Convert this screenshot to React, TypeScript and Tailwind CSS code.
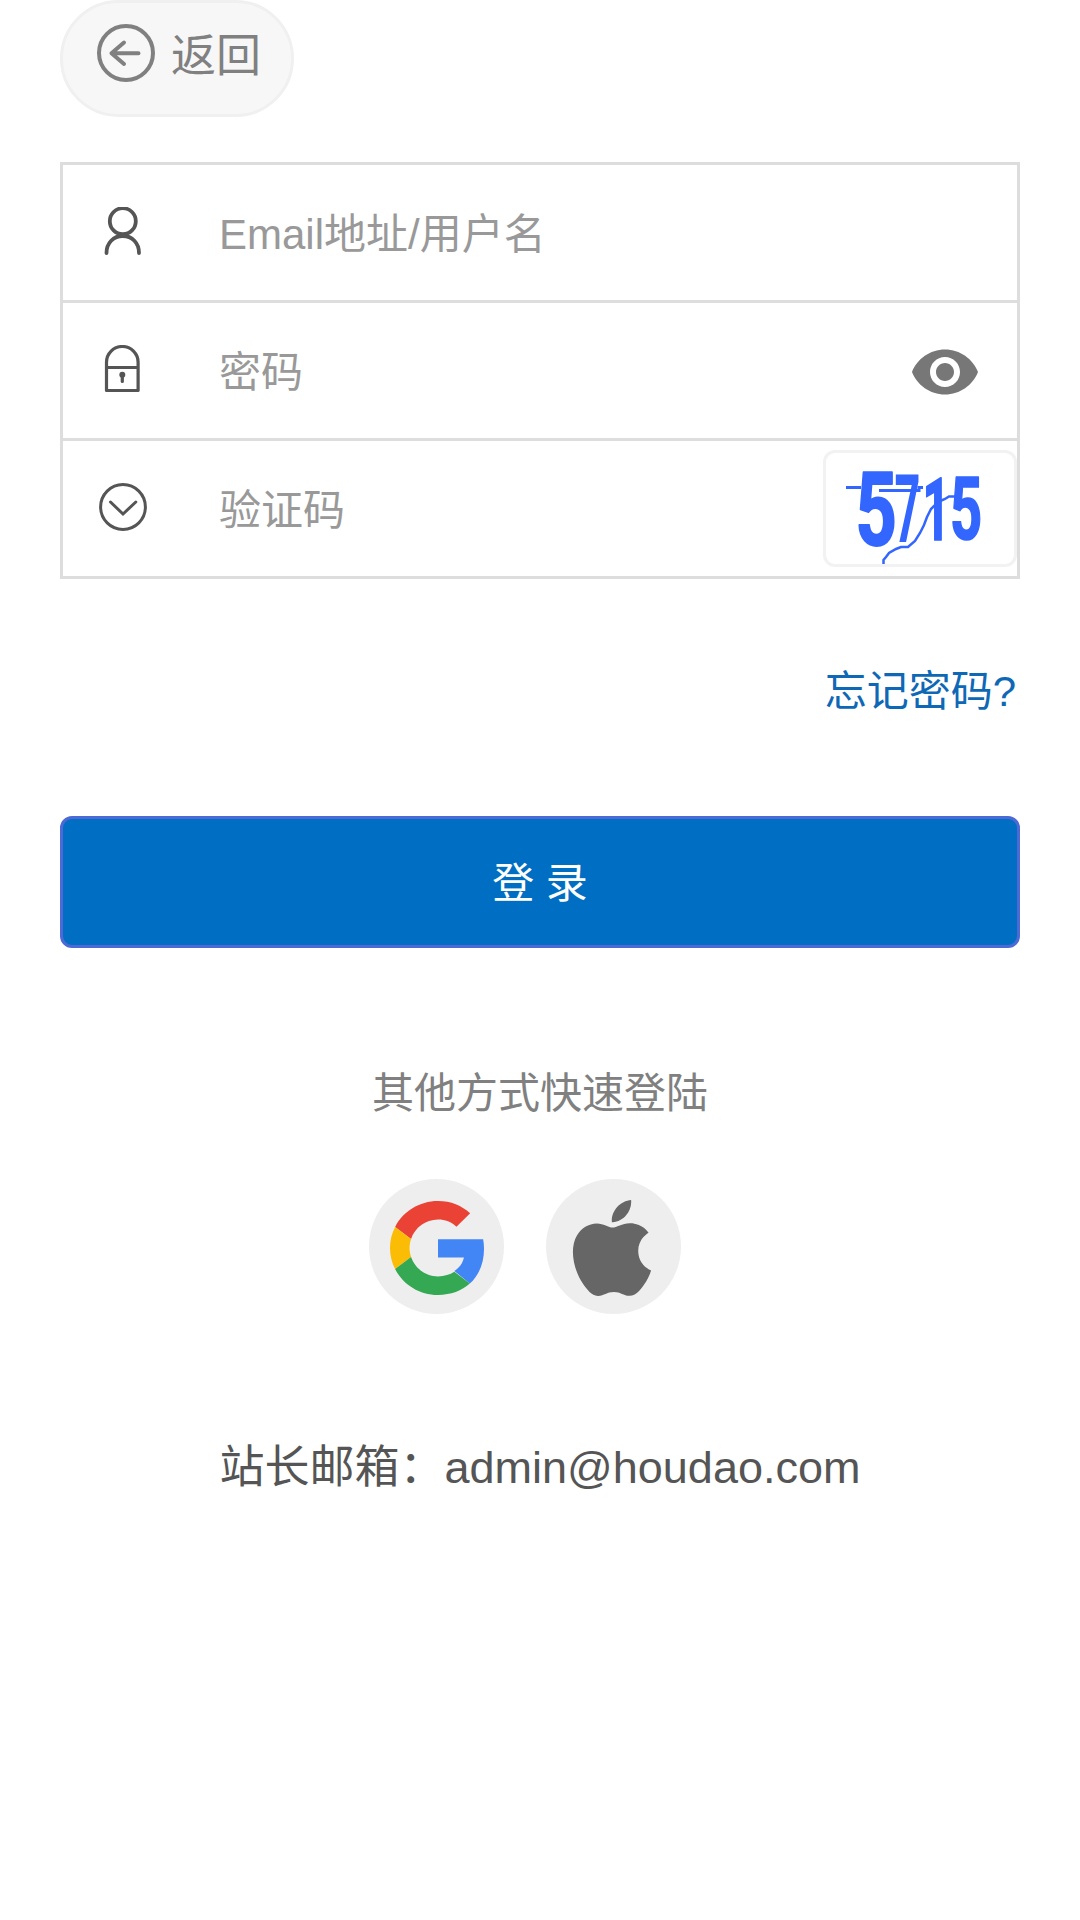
import { useState } from 'react'
import type { ReactNode } from 'react'

function BackIcon() {
  return (
    <svg className="h-[60px] w-[60px]" viewBox="0 0 60 60" fill="none" stroke="#808080" strokeWidth="4" strokeLinecap="round" strokeLinejoin="round" aria-hidden="true">
      <circle cx="30" cy="29" r="27" />
      <path d="M42.5 29.2H15.5M28 18.5L15.5 29.2L28 40" />
    </svg>
  )
}

function UserIcon() {
  return (
    <svg className="h-12 w-12" viewBox="0 0 48 48" fill="none" stroke="#555" strokeWidth="3.8" strokeLinecap="round" aria-hidden="true">
      <circle cx="23.8" cy="14.2" r="13" />
      <path d="M7.5 46C7.5 36 14.5 29 23.8 29S40 36 40 46" />
    </svg>
  )
}

function LockIcon() {
  return (
    <svg className="h-12 w-12" viewBox="0 0 48 48" fill="none" stroke="#555" strokeWidth="3.2" strokeLinejoin="round" aria-hidden="true">
      <path d="M7.5 45.5V17.3a15.8 15.8 0 0 1 31.6 0V45.5ZM7.5 22.5H39.1" />
      <circle cx="23.3" cy="29.7" r="3" fill="#555" stroke="none" />
      <path d="M23.3 30V36.5" strokeLinecap="round" />
    </svg>
  )
}

function CheckIcon() {
  return (
    <svg className="h-12 w-12" viewBox="0 0 48 48" fill="none" stroke="#555" strokeWidth="3" strokeLinecap="round" aria-hidden="true">
      <circle cx="24" cy="24" r="22.4" />
      <path d="M11.5 19L24 31L36.8 19" />
    </svg>
  )
}

function EyeIcon() {
  return (
    <svg className="h-[72px] w-[72px]" viewBox="0 0 24 24" fill="#777" aria-hidden="true">
      <path d="M12 4.5C7 4.5 2.73 7.61 1 12c1.73 4.39 6 7.5 11 7.5s9.27-3.11 11-7.5c-1.73-4.39-6-7.5-11-7.5zM12 17c-2.76 0-5-2.24-5-5s2.24-5 5-5 5 2.24 5 5-2.24 5-5 5zm0-8c-1.66 0-3 1.34-3 3s1.34 3 3 3 3-1.34 3-3-1.34-3-3-3z" />
    </svg>
  )
}

function GoogleIcon() {
  return (
    <svg className="mt-[2px] ml-[1px] h-[94px] w-[94px]" viewBox="0 0 46.98 48" preserveAspectRatio="none" aria-hidden="true">
      <path fill="#EA4335" d="M24 9.5c3.54 0 6.71 1.22 9.21 3.6l6.85-6.85C35.9 2.38 30.47 0 24 0 14.62 0 6.51 5.38 2.56 13.22l7.98 6.19C12.43 13.72 17.74 9.5 24 9.5z" />
      <path fill="#4285F4" d="M46.98 24.55c0-1.72-.15-3.4-.42-5H24v9.3h12.94c-.58 2.96-2.26 5.2-4.78 6.9l7.73 6.44c4.51-4.18 7.09-10.36 7.09-17.64z" />
      <path fill="#FBBC05" d="M10.53 28.59c-.48-1.45-.76-2.99-.76-4.59s.27-3.14.76-4.59l-7.98-6.19C.92 16.46 0 20.12 0 24c0 3.88.92 7.54 2.56 10.78l7.97-6.19z" />
      <path fill="#34A853" d="M24 48c6.48 0 11.93-2.13 15.89-5.81l-7.73-6c-2.15 1.45-4.92 2.3-8.16 2.3-6.26 0-11.57-4.22-13.47-9.91l-7.98 6.19C6.51 42.62 14.62 48 24 48z" />
    </svg>
  )
}

function AppleIcon() {
  return (
    <svg className="mt-[3px] mr-[3px] h-24 w-24" viewBox="0 0 24 24" fill="#666" aria-hidden="true">
      <path d="M12.152 6.896c-.948 0-2.415-1.078-3.96-1.04-2.04.027-3.91 1.183-4.961 3.014-2.117 3.675-.546 9.103 1.519 12.09 1.013 1.454 2.208 3.09 3.792 3.039 1.52-.065 2.09-.987 3.935-.987 1.831 0 2.35.987 3.96.948 1.637-.026 2.676-1.48 3.676-2.948 1.156-1.688 1.636-3.325 1.662-3.415-.039-.013-3.182-1.221-3.22-4.857-.026-3.04 2.48-4.494 2.597-4.559-1.429-2.09-3.623-2.324-4.39-2.376-2-.156-3.675 1.09-4.61 1.09zM15.53 3.83c.843-1.012 1.4-2.427 1.245-3.83-1.207.052-2.662.805-3.532 1.818-.78.896-1.454 2.338-1.273 3.714 1.338.104 2.715-.688 3.559-1.701" />
    </svg>
  )
}

/** Verification digits, squeezed and crossed by two noise lines. */
function Captcha() {
  return (
    <svg className="h-full w-full overflow-visible" viewBox="825 453 188 111" fill="#36f" aria-label="5715">
      <g fontFamily="Roboto" fontWeight="700" fontSize="100" stroke="#36f" strokeLinejoin="round">
        <text transform="translate(854.5 545) scale(.72 1.02)" strokeWidth="2">5</text>
        <text transform="translate(893.5 541.5) scale(.45 .95)" strokeWidth="0">7</text>
        <text transform="translate(921.5 539.5) scale(.48 .87)" strokeWidth="2">1</text>
        <text transform="translate(949 539) scale(.56 .87)" strokeWidth="2">5</text>
      </g>
      <g fill="none" stroke="#36f" strokeWidth="3">
        <path d="M845 487.5H860M878 490.5H918V487.5H922" />
        <path strokeWidth="2.5" d="M882.5 564V560L885 557L888 553L895 549L900 547H907L914 541L919 533L923 525L926 517L930 509L937 502L944 499L948 496.5H956" />
      </g>
    </svg>
  )
}

interface FieldProps {
  icon: ReactNode
  placeholder: string
  type?: string
  children?: ReactNode
}

function Field({ icon, placeholder, type = 'text', children }: FieldProps) {
  return (
    <div className="flex h-[138px] items-center border-b-[3px] border-[#ddd] pl-9">
      <span className="mb-[3px] shrink-0">{icon}</span>
      <input
        type={type}
        placeholder={placeholder}
        aria-label={placeholder}
        className="ml-[72px] h-full min-w-0 flex-1 bg-transparent pt-[5px] text-[42px] text-[#555] placeholder:text-[#999] focus:outline-none"
      />
      {children}
    </div>
  )
}

export default function App() {
  const [showPassword, setShowPassword] = useState(false)

  return (
    <main className="min-h-[1920px] bg-white px-[60px] font-['Liberation_Sans','Noto_Sans_CJK_SC',sans-serif]" lang="zh-CN">
      <button type="button" className="flex h-[117px] w-[234px] items-center rounded-full border-[3px] border-[#f0f0f0] bg-[#f7f7f7] pb-[9px] pl-[33px] text-[45px] text-[#808080]">
        <BackIcon />
        <span className="mt-[5px] ml-[15px] leading-[60px]">返回</span>
      </button>

      <form onSubmit={(event) => event.preventDefault()}>
        <div className="mt-[45px] border-x-[3px] border-t-[3px] border-[#ddd]">
          <Field icon={<UserIcon />} placeholder="Email地址/用户名" />
          <Field icon={<LockIcon />} placeholder="密码" type={showPassword ? 'text' : 'password'}>
            <button type="button" onClick={() => setShowPassword(!showPassword)} className="mt-[3px] mr-9" aria-label="显示密码">
              <EyeIcon />
            </button>
          </Field>
          <Field icon={<CheckIcon />} placeholder="验证码">
            <div className="h-[117px] w-[194px] shrink-0 rounded-[12px] border-[3px] border-[#f2f2f2]">
              <Captcha />
            </div>
          </Field>
        </div>

        <div className="mt-[83px] flex justify-end pr-1">
          <a href="#" className="text-[42px] leading-[60px] text-[#0e68b5]">忘记密码?</a>
        </div>

        <button type="submit" className="mt-[94px] h-[132px] w-full rounded-[12px] border-[3px] border-[#4c69d5] bg-[#006ec3] pt-[2px] text-[42px] text-white">
          登 录
        </button>
      </form>

      <section className="mt-[116px] text-center">
        <h2 className="text-[42px] leading-[60px] text-[#808080]">其他方式快速登陆</h2>
        <div className="mt-[55px] flex justify-center gap-[42px] pr-[30px]">
          <a href="#" aria-label="Google" className="flex h-[135px] w-[135px] items-center justify-center rounded-full bg-[#eee]">
            <GoogleIcon />
          </a>
          <a href="#" aria-label="Apple" className="flex h-[135px] w-[135px] items-center justify-center rounded-full bg-[#eee]">
            <AppleIcon />
          </a>
        </div>
      </section>

      <p className="mt-[124px] text-center text-[45px] leading-[60px] text-[#555]">站长邮箱：admin@houdao.com</p>
    </main>
  )
}
